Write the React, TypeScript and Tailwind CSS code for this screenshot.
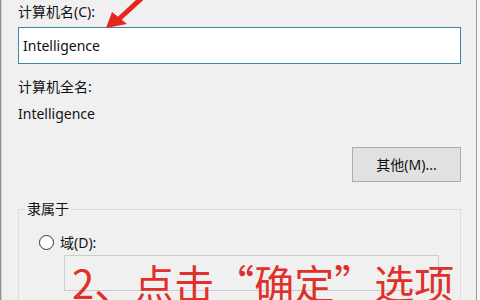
import React from "react";

const font = { fontFamily: '"Noto Sans", "Noto Sans CJK SC", sans-serif' };

export default function App() {
  return (
    <div
      className="relative w-[480px] h-[300px] overflow-hidden bg-[#f0f0f0] flex text-[14px] text-[#111111]"
      style={font}
    >
      <div className="w-[1px] h-full bg-[#8c8c8c]" />
      <div className="w-[1px] h-full bg-[#d4d4d4]" />
      <div className="flex-1 flex flex-col pl-[16px] pr-[15px] min-h-0">
        <div className="shrink-0 mt-[2px] h-[20px] leading-[20px]">计算机名(C):</div>
        <div className="shrink-0 mt-[5px] h-[37px] border border-[#3a8aa0] bg-white flex items-center pl-[4px]">
          Intelligence
        </div>
        <div className="shrink-0 mt-[13px] h-[20px] leading-[20px]">计算机全名:</div>
        <div className="shrink-0 mt-[7px] h-[20px] leading-[20px]">Intelligence</div>
        <div className="shrink-0 mt-[23px] self-end w-[109px] h-[35px] border border-[#adadad] bg-[#e1e1e1] flex items-center justify-center">
          其他(M)...
        </div>
        <fieldset className="shrink-0 mt-[17px] border border-[#dcdcdc] h-[160px] px-0 pb-0">
          <legend className="ml-[6px] px-[2px] h-[20px] leading-[20px]">隶属于</legend>
          <div className="mt-[13px] pl-[20px] h-[20px] flex items-center gap-[6px]">
            <span className="w-[15px] h-[15px] rounded-full border border-[#333] bg-white" />
            <span>域(D):</span>
          </div>
          <div className="mt-[3px] ml-[45px] w-[375px] h-[36px] border border-[#cccccc] bg-[#f0f0f0]" />
        </fieldset>
      </div>
      <div className="w-[1px] h-full bg-[#9a9a9a]" />
      <div className="w-[3px] h-full bg-[#f7f7f7]" />

      <svg className="absolute left-0 top-0" width="480" height="60" viewBox="0 0 480 60">
        <path d="M144 -4 L119 19" stroke="#e8261f" strokeWidth="5" strokeLinecap="round" />
        <polygon points="106,28 112,12 127,24" fill="#e8261f" />
      </svg>

      <div
        className="absolute left-[72px] top-[258px] text-[40px] leading-[48px] text-[#e0302a] whitespace-nowrap"
        style={{ fontFamily: '"Noto Sans CJK SC", sans-serif' }}
      >
        2、点击“确定”选项
      </div>
    </div>
  );
}
